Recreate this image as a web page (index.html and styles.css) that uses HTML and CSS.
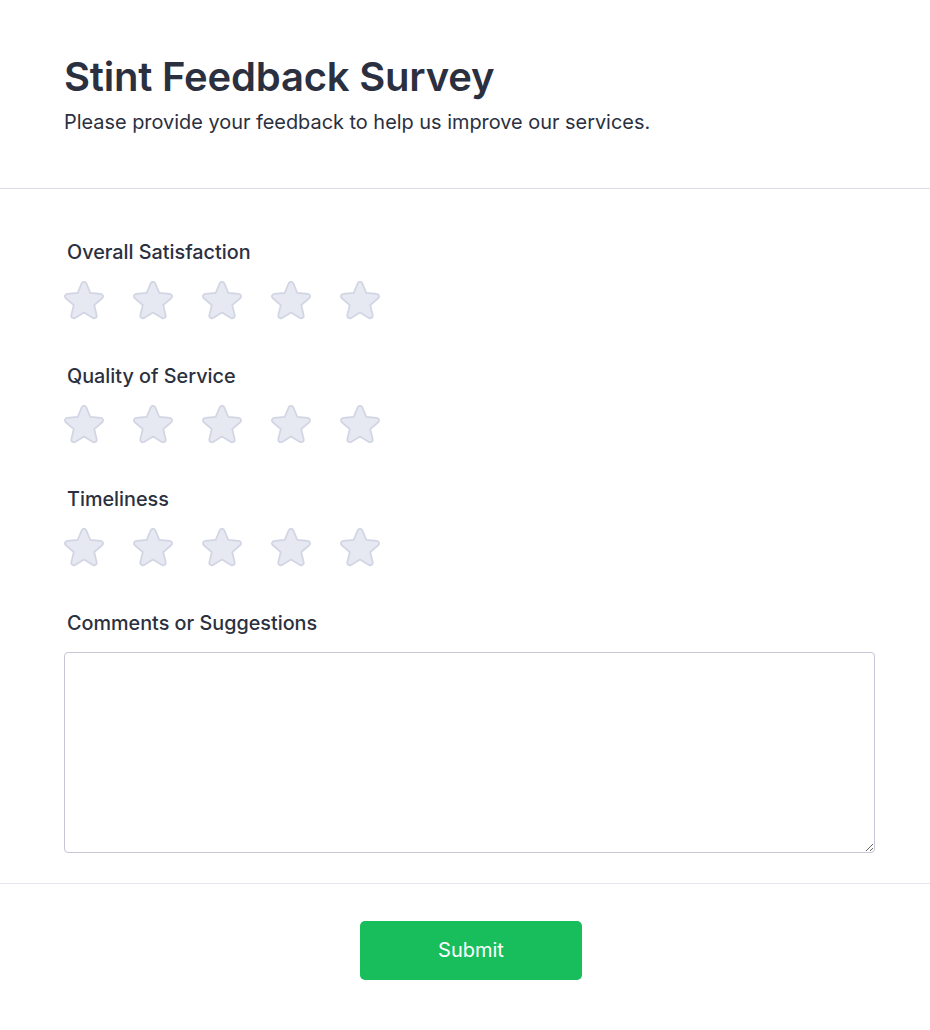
FILE: index.html
```html
<!DOCTYPE html>
<html>
<head>
<meta charset="utf-8">
<link rel="stylesheet" href="styles.css">
</head>
<body>
<div class="card">
  <header class="head">
    <h1 class="title">Stint Feedback Survey</h1>
    <p class="subtitle">Please provide your feedback to help us improve our services.</p>
  </header>
  <main class="body">
    <section class="field">
      <div class="label">Overall Satisfaction</div>
      <div class="stars">
        <svg class="star" viewBox="1.6 2 20.8 20"><path d="M10.788 3.21c.448-1.077 1.976-1.077 2.424 0l2.082 5.006 5.404.434c1.164.093 1.636 1.545.749 2.305l-4.117 3.527 1.257 5.273c.271 1.136-.964 2.033-1.96 1.425L12 18.354 7.373 21.18c-.996.608-2.231-.29-1.96-1.425l1.257-5.273-4.117-3.527c-.887-.76-.415-2.212.749-2.305l5.404-.434 2.082-5.005Z"/></svg>
        <svg class="star" viewBox="1.6 2 20.8 20"><path d="M10.788 3.21c.448-1.077 1.976-1.077 2.424 0l2.082 5.006 5.404.434c1.164.093 1.636 1.545.749 2.305l-4.117 3.527 1.257 5.273c.271 1.136-.964 2.033-1.96 1.425L12 18.354 7.373 21.18c-.996.608-2.231-.29-1.96-1.425l1.257-5.273-4.117-3.527c-.887-.76-.415-2.212.749-2.305l5.404-.434 2.082-5.005Z"/></svg>
        <svg class="star" viewBox="1.6 2 20.8 20"><path d="M10.788 3.21c.448-1.077 1.976-1.077 2.424 0l2.082 5.006 5.404.434c1.164.093 1.636 1.545.749 2.305l-4.117 3.527 1.257 5.273c.271 1.136-.964 2.033-1.96 1.425L12 18.354 7.373 21.18c-.996.608-2.231-.29-1.96-1.425l1.257-5.273-4.117-3.527c-.887-.76-.415-2.212.749-2.305l5.404-.434 2.082-5.005Z"/></svg>
        <svg class="star" viewBox="1.6 2 20.8 20"><path d="M10.788 3.21c.448-1.077 1.976-1.077 2.424 0l2.082 5.006 5.404.434c1.164.093 1.636 1.545.749 2.305l-4.117 3.527 1.257 5.273c.271 1.136-.964 2.033-1.96 1.425L12 18.354 7.373 21.18c-.996.608-2.231-.29-1.96-1.425l1.257-5.273-4.117-3.527c-.887-.76-.415-2.212.749-2.305l5.404-.434 2.082-5.005Z"/></svg>
        <svg class="star" viewBox="1.6 2 20.8 20"><path d="M10.788 3.21c.448-1.077 1.976-1.077 2.424 0l2.082 5.006 5.404.434c1.164.093 1.636 1.545.749 2.305l-4.117 3.527 1.257 5.273c.271 1.136-.964 2.033-1.96 1.425L12 18.354 7.373 21.18c-.996.608-2.231-.29-1.96-1.425l1.257-5.273-4.117-3.527c-.887-.76-.415-2.212.749-2.305l5.404-.434 2.082-5.005Z"/></svg>
      </div>
    </section>
    <section class="field">
      <div class="label">Quality of Service</div>
      <div class="stars">
        <svg class="star" viewBox="1.6 2 20.8 20"><path d="M10.788 3.21c.448-1.077 1.976-1.077 2.424 0l2.082 5.006 5.404.434c1.164.093 1.636 1.545.749 2.305l-4.117 3.527 1.257 5.273c.271 1.136-.964 2.033-1.96 1.425L12 18.354 7.373 21.18c-.996.608-2.231-.29-1.96-1.425l1.257-5.273-4.117-3.527c-.887-.76-.415-2.212.749-2.305l5.404-.434 2.082-5.005Z"/></svg>
        <svg class="star" viewBox="1.6 2 20.8 20"><path d="M10.788 3.21c.448-1.077 1.976-1.077 2.424 0l2.082 5.006 5.404.434c1.164.093 1.636 1.545.749 2.305l-4.117 3.527 1.257 5.273c.271 1.136-.964 2.033-1.96 1.425L12 18.354 7.373 21.18c-.996.608-2.231-.29-1.96-1.425l1.257-5.273-4.117-3.527c-.887-.76-.415-2.212.749-2.305l5.404-.434 2.082-5.005Z"/></svg>
        <svg class="star" viewBox="1.6 2 20.8 20"><path d="M10.788 3.21c.448-1.077 1.976-1.077 2.424 0l2.082 5.006 5.404.434c1.164.093 1.636 1.545.749 2.305l-4.117 3.527 1.257 5.273c.271 1.136-.964 2.033-1.96 1.425L12 18.354 7.373 21.18c-.996.608-2.231-.29-1.96-1.425l1.257-5.273-4.117-3.527c-.887-.76-.415-2.212.749-2.305l5.404-.434 2.082-5.005Z"/></svg>
        <svg class="star" viewBox="1.6 2 20.8 20"><path d="M10.788 3.21c.448-1.077 1.976-1.077 2.424 0l2.082 5.006 5.404.434c1.164.093 1.636 1.545.749 2.305l-4.117 3.527 1.257 5.273c.271 1.136-.964 2.033-1.96 1.425L12 18.354 7.373 21.18c-.996.608-2.231-.29-1.96-1.425l1.257-5.273-4.117-3.527c-.887-.76-.415-2.212.749-2.305l5.404-.434 2.082-5.005Z"/></svg>
        <svg class="star" viewBox="1.6 2 20.8 20"><path d="M10.788 3.21c.448-1.077 1.976-1.077 2.424 0l2.082 5.006 5.404.434c1.164.093 1.636 1.545.749 2.305l-4.117 3.527 1.257 5.273c.271 1.136-.964 2.033-1.96 1.425L12 18.354 7.373 21.18c-.996.608-2.231-.29-1.96-1.425l1.257-5.273-4.117-3.527c-.887-.76-.415-2.212.749-2.305l5.404-.434 2.082-5.005Z"/></svg>
      </div>
    </section>
    <section class="field">
      <div class="label">Timeliness</div>
      <div class="stars">
        <svg class="star" viewBox="1.6 2 20.8 20"><path d="M10.788 3.21c.448-1.077 1.976-1.077 2.424 0l2.082 5.006 5.404.434c1.164.093 1.636 1.545.749 2.305l-4.117 3.527 1.257 5.273c.271 1.136-.964 2.033-1.96 1.425L12 18.354 7.373 21.18c-.996.608-2.231-.29-1.96-1.425l1.257-5.273-4.117-3.527c-.887-.76-.415-2.212.749-2.305l5.404-.434 2.082-5.005Z"/></svg>
        <svg class="star" viewBox="1.6 2 20.8 20"><path d="M10.788 3.21c.448-1.077 1.976-1.077 2.424 0l2.082 5.006 5.404.434c1.164.093 1.636 1.545.749 2.305l-4.117 3.527 1.257 5.273c.271 1.136-.964 2.033-1.96 1.425L12 18.354 7.373 21.18c-.996.608-2.231-.29-1.96-1.425l1.257-5.273-4.117-3.527c-.887-.76-.415-2.212.749-2.305l5.404-.434 2.082-5.005Z"/></svg>
        <svg class="star" viewBox="1.6 2 20.8 20"><path d="M10.788 3.21c.448-1.077 1.976-1.077 2.424 0l2.082 5.006 5.404.434c1.164.093 1.636 1.545.749 2.305l-4.117 3.527 1.257 5.273c.271 1.136-.964 2.033-1.96 1.425L12 18.354 7.373 21.18c-.996.608-2.231-.29-1.96-1.425l1.257-5.273-4.117-3.527c-.887-.76-.415-2.212.749-2.305l5.404-.434 2.082-5.005Z"/></svg>
        <svg class="star" viewBox="1.6 2 20.8 20"><path d="M10.788 3.21c.448-1.077 1.976-1.077 2.424 0l2.082 5.006 5.404.434c1.164.093 1.636 1.545.749 2.305l-4.117 3.527 1.257 5.273c.271 1.136-.964 2.033-1.96 1.425L12 18.354 7.373 21.18c-.996.608-2.231-.29-1.96-1.425l1.257-5.273-4.117-3.527c-.887-.76-.415-2.212.749-2.305l5.404-.434 2.082-5.005Z"/></svg>
        <svg class="star" viewBox="1.6 2 20.8 20"><path d="M10.788 3.21c.448-1.077 1.976-1.077 2.424 0l2.082 5.006 5.404.434c1.164.093 1.636 1.545.749 2.305l-4.117 3.527 1.257 5.273c.271 1.136-.964 2.033-1.96 1.425L12 18.354 7.373 21.18c-.996.608-2.231-.29-1.96-1.425l1.257-5.273-4.117-3.527c-.887-.76-.415-2.212.749-2.305l5.404-.434 2.082-5.005Z"/></svg>
      </div>
    </section>
    <section class="field">
      <div class="label">Comments or Suggestions</div>
      <textarea class="comments"></textarea>
    </section>
  </main>
  <footer class="foot">
    <button class="submit">Submit</button>
  </footer>
</div>
</body>
</html>
```
FILE: styles.css
```css
html, body {
  margin: 0;
  padding: 0;
  overflow: hidden;
  background: #ffffff;
}
body {
  font-family: Inter, "Noto Sans", sans-serif;
  color: #2b3040;
}
.card {
  width: 942px;
  background: #ffffff;
}
.head {
  padding: 53px 64px 52px;
  border-bottom: 1px solid #dcdce8;
}
.title {
  margin: 0;
  font-size: 40px;
  font-weight: 600;
  line-height: 48px;
  color: #2b3040;
  letter-spacing: -0.2px;
}
.subtitle {
  margin: 7px 0 0;
  font-size: 19.9px;
  line-height: 28px;
  font-weight: 400;
  color: #2b3040;
}
.body {
  padding: 50px 64px 30px;
  display: flex;
  flex-direction: column;
  gap: 43px;
}
.field {
  display: flex;
  flex-direction: column;
}
.label {
  padding-left: 3px;
  font-size: 19.8px;
  font-weight: 500;
  line-height: 26px;
  color: #2b3040;
}
.stars {
  display: flex;
  gap: 29px;
  margin-top: 16px;
}
.star {
  width: 40px;
  height: 38.5px;
  fill: #e6e8f2;
  stroke: #d2d5e3;
  stroke-width: 0.9;
}
.comments {
  margin-top: 16px;
  width: 811px;
  height: 201px;
  box-sizing: border-box;
  border: 1px solid #c5c7d6;
  border-radius: 4px;
  resize: vertical;
  font-family: inherit;
  font-size: 16px;
}
.foot {
  border-top: 1px solid #e6e6ee;
  padding: 37px 0 50px;
  display: flex;
  justify-content: center;
}
.submit {
  width: 222px;
  height: 59px;
  border: none;
  border-radius: 5px;
  background: #19be5c;
  color: #ffffff;
  font-family: Inter, "Noto Sans", sans-serif;
  font-size: 20px;
  font-weight: 400;
}
```
